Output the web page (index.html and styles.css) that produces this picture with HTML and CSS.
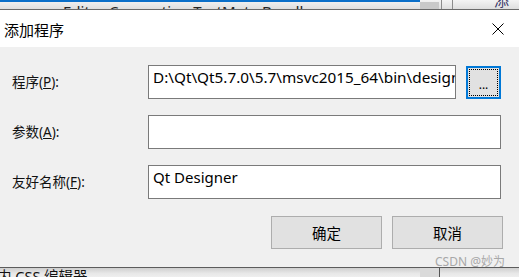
FILE: index.html
```html
<!DOCTYPE html>
<html>
  <head>
    <title>添加程序</title>
    <link rel="stylesheet" href="styles.css">
  </head>
  <body>
    <div class="backdrop-top">
      <div class="back-tabbar">
        <div class="back-blue"></div>
        <div class="back-thumb"></div>
        <div class="back-sep"></div>
        <div class="back-sep second"></div>
      </div>
      <div class="back-text">Editor Connection TextMate Bundles</div>
      <div class="back-add">添加</div>
    </div>

    <div class="dialog">
      <div class="titlebar">
        <span class="title">添加程序</span>
        <svg class="close" width="12" height="12" viewBox="0 0 12 12">
          <path d="M0.5 0.5 L11.5 11.5 M11.5 0.5 L0.5 11.5" stroke="#000" stroke-width="1" fill="none" />
        </svg>
      </div>

      <div class="dialog-body">
        <div class="form">
          <label class="field-label">程序(<u>P</u>):</label>
          <div class="field-line">
            <div class="text-box path">D:\Qt\Qt5.7.0\5.7\msvc2015_64\bin\designer.exe</div>
            <button class="browse" type="button">...</button>
          </div>

          <label class="field-label">参数(<u>A</u>):</label>
          <div class="text-box"></div>

          <label class="field-label">友好名称(<u>F</u>):</label>
          <div class="text-box">Qt Designer</div>
        </div>

        <div class="actions">
          <button class="btn" type="button">确定</button>
          <button class="btn" type="button">取消</button>
        </div>

        <div class="watermark">CSDN @妙为</div>
      </div>
    </div>

    <div class="backdrop-bottom">
      <span class="back-text bottom">内 CSS 编辑器</span>
      <div class="back-thumb bottom"></div>
    </div>
  </body>
</html>
```

FILE: styles.css
```css
body {
  margin: 0;
  width: 519px;
  height: 277px;
  overflow: hidden;
  font-family: "Noto Sans", "Noto Sans CJK SC", sans-serif;
  background-color: #f0f0f0;
  color: #000;
}

/* window behind the dialog */
.backdrop-top {
  position: relative;
  height: 9px;
  overflow: hidden;
  background: linear-gradient(#f4f4f4, #dedede);
}

.back-tabbar {
  display: flex;
  height: 9px;
}

.back-blue {
  width: 420px;
  height: 2px;
  background-color: #0a6fc9;
}

.back-thumb {
  width: 19px;
  margin-top: 2px;
  background-color: #c9c9c9;
}

.back-sep {
  width: 1px;
  margin-left: 2px;
  background-color: #8c8c8c;
}

.back-sep.second {
  margin-left: 10px;
}

.back-text {
  position: absolute;
  left: 63px;
  top: 2px;
  font-size: 15px;
  line-height: 18px;
  color: #222;
  white-space: nowrap;
}

.back-add {
  position: absolute;
  left: 494px;
  top: -9px;
  font-size: 15px;
  line-height: 18px;
  color: #3a3a6a;
  font-family: "Noto Sans CJK SC", sans-serif;
}

/* dialog */
.dialog {
  border-top: 1px solid #6a6a6a;
  border-bottom: 1px solid #5c5c5c;
}

.titlebar {
  height: 37px;
  background-color: #fff;
  display: flex;
  align-items: center;
  justify-content: space-between;
  padding: 0 15px 0 4px;
}

.title {
  font-family: "Noto Sans CJK SC", sans-serif;
  font-size: 15px;
  line-height: 18px;
  margin-top: 3px;
}

.close {
  display: block;
}

.dialog-body {
  height: 220px;
  box-sizing: border-box;
  padding: 18px 18px 0 12px;
  background-color: #f0f0f0;
  overflow: hidden;
}

.form {
  display: grid;
  grid-template-columns: 136px minmax(0, 1fr);
  row-gap: 16px;
  align-items: center;
}

.field-label {
  font-family: "Noto Sans", "Noto Sans CJK SC", sans-serif;
  font-size: 13.5px;
  line-height: 18px;
  color: #111;
}

.field-line {
  display: flex;
  align-items: center;
  gap: 10px;
  min-width: 0;
}

.text-box {
  flex: 1;
  min-width: 0;
  height: 34px;
  box-sizing: border-box;
  border: 1px solid #7a7a7a;
  background-color: #fff;
  padding: 0 0 0 4px;
  font-size: 15px;
  line-height: 22px;
  white-space: nowrap;
  overflow: hidden;
}

.text-box.path {
  font-size: 15.3px;
}

.browse {
  width: 35px;
  height: 33px;
  flex: none;
  border: 2px solid #0078d7;
  background-color: #e1e1e1;
  outline: 1px dotted #000;
  outline-offset: -4px;
  font-family: "Noto Sans", sans-serif;
  font-size: 12px;
  line-height: 12px;
  padding: 6px 0 0;
}

.actions {
  display: flex;
  justify-content: flex-end;
  gap: 10px;
  margin-top: 17px;
  margin-right: -2px;
}

.btn {
  width: 111px;
  height: 33px;
  border: 1px solid #adadad;
  background-color: #e1e1e1;
  font-family: "Noto Sans CJK SC", sans-serif;
  font-size: 14.5px;
  padding: 0;
  color: #000;
}

.watermark {
  text-align: right;
  margin: 6px -4px 0 0;
  font-family: "Noto Sans", "Noto Sans CJK SC", sans-serif;
  font-size: 12px;
  line-height: 13px;
  color: #a8a8a8;
}

.backdrop-bottom {
  position: relative;
  height: 9px;
  overflow: hidden;
  background: linear-gradient(#cfcfcf, #e8e8e8 60%, #eeeeee);
}

.back-text.bottom {
  left: -3px;
  top: 0;
  font-family: "Noto Sans", "Noto Sans CJK SC", sans-serif;
  font-size: 14.5px;
  line-height: 16px;
  color: #111;
}

.back-thumb.bottom {
  position: absolute;
  left: 420px;
  top: 0;
  height: 9px;
  margin: 0;
  background-color: #dadada;
  border-right: 1px solid #555;
}
```
